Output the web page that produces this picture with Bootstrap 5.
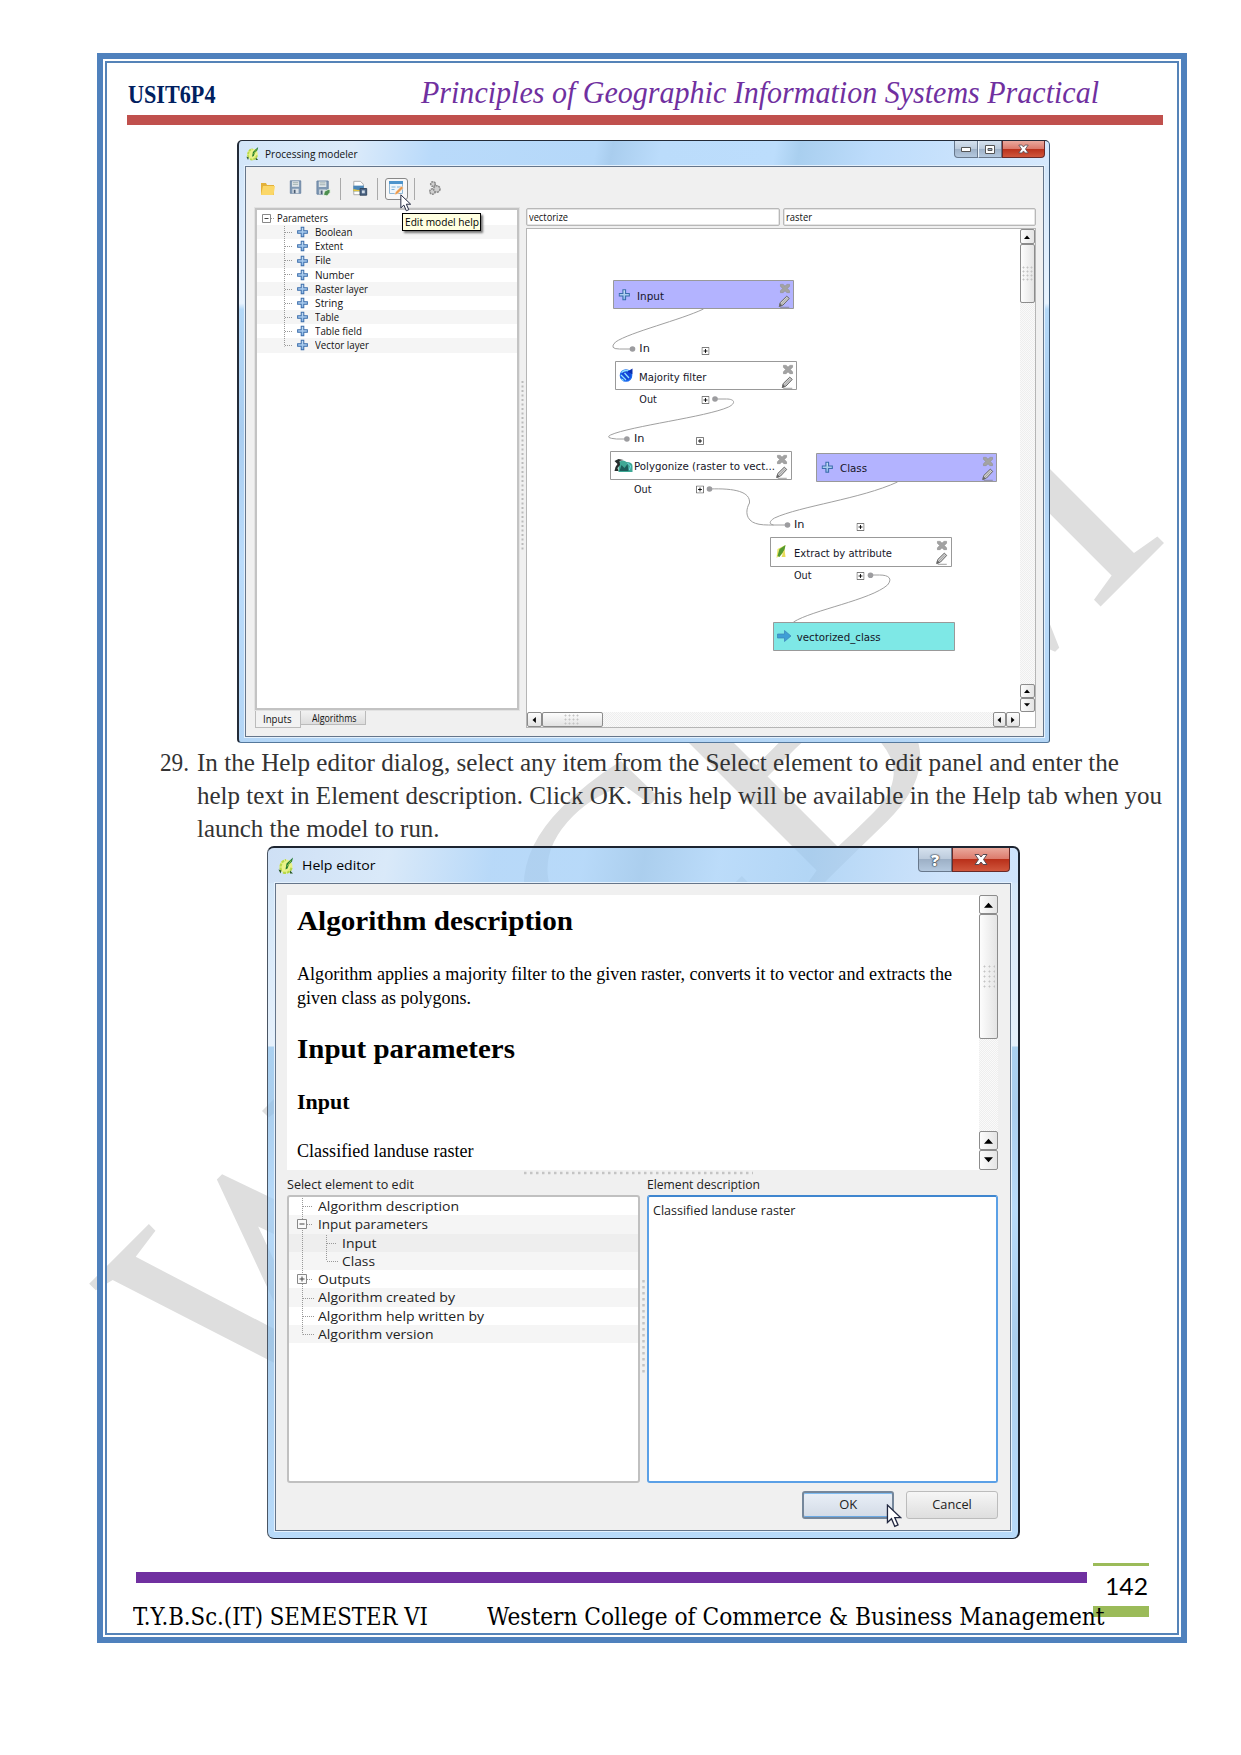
<!DOCTYPE html>
<html lang="en">
<head>
<meta charset="utf-8">
<title>Principles of Geographic Information Systems Practical</title>
<link rel="stylesheet" href="https://cdn.jsdelivr.net/npm/bootstrap@5.3.0/dist/css/bootstrap.min.css">
<style>
body{width:1241px;height:1755px;background:#fff;position:relative;overflow:hidden;font-family:"Liberation Serif",serif;color:#000}
.fit{display:inline-block;white-space:nowrap;transform-origin:0 50%;flex:none}
.watermark{position:absolute;left:0;top:0;z-index:0}
.sheet{position:relative;z-index:1;width:1090px;height:1590px;margin:53px 0 0 97px;border:6px solid #4f81bd;box-shadow:inset 0 0 0 2px #fff,inset 0 0 0 4px #5583b8}
.doc-head{height:56px;padding:8.5px 0 0 25px;line-height:48px}
.code{font-size:25px;font-weight:700;color:#002060;width:293px}
.subject{font-size:32px;font-style:italic;color:#7030a0}
.redrule{height:10px;width:1036px;margin-left:24px;background:#c0504d}
.steps{margin:2.5px 0 0 57px;font-size:24.5px;line-height:33.2px;color:#333;height:100.5px}
.steps .num{width:37px}
/* aero windows */
.aero{border:1px solid #2b3442;font-family:"Open Sans",sans-serif;flex:none}
.aero-client{background:#f0f0f0;border:1px solid #65758a;box-shadow:0 0 0 1px #e4f1fd}
.capt{display:flex;flex:none}
.capt span{display:flex;align-items:center;justify-content:center;border:1px solid #68788c;border-top:0;border-left-color:#eef5fc;background:linear-gradient(#d5e1ee,#bccbdc 48%,#9db0c6 50%,#b4c8de)}
.capt span:first-child{border-left-color:#68788c;border-bottom-left-radius:4px}
.capt .x{background:linear-gradient(#eaa99d,#dc7a6b 48%,#b9301a 50%,#d0563c);border-color:#6a2a28;border-bottom-right-radius:4px}
.capt .q{font-size:16px;font-weight:800;line-height:22px;color:#fff;text-shadow:0 0 1px #39414c,0 0 1px #39414c,0 0 2px #39414c,0 0 1px #39414c}
#w1{width:813px;height:603px;margin:15px 0 0 134px;border-left-width:2px;border-color:#232b38 #3e5a78 #55789c #232b38;border-radius:5px 5px 3px 4px;
 background:linear-gradient(100deg,#d3e6f9 0,#dcebfa 14%,#b9dafa 24%,#b5d8f9 44%,#a9cdee 46%,#bbdcfb 52%,#bcddfc 66%,#a9cfef 69%,#bddcfb 78%,#d6e9fd 100%) 0 0/100% 25px no-repeat,linear-gradient(#cfe4f9,#e8f3fe 27%,#b5d9f8 28%,#a9cdf0 48%,#bbdcfb 70%,#b4d6f6)}
#w1 .bar{height:25px;padding:0 4px 0 7px}
#w1 .aero-client{width:799px;height:571px;margin-left:6px}
#w1 .capt{height:17px}
.ttl1{font-size:10.8px;line-height:22px;margin-left:6px;color:#111}
.toolbar1{height:41px;padding:11px 0 0 14px}
.toolbar1>svg,.toolbar1>b{flex:none}
.sepr{width:1px;height:22px;background:#aaa;flex:none}
.actbtn{width:23px;height:22px;border:1px solid #888;border-radius:3px;background:#f8f8f8;flex:none}
.tree1{width:264px;height:502px;border:2px solid #c3c3c3;outline:1px solid #e2e2e2;background:#fff;font-size:10.4px;line-height:14.17px;position:relative;color:#111;padding-top:1px}
.tree1>div{height:14.17px;padding-left:40px}
.tree1>div:nth-of-type(even){background:#f5f5f5}
.tree1>.root{padding-left:20.5px}
.tree1 svg.pl{margin-right:7px;flex:none}
.guide{position:absolute;left:0;top:0;pointer-events:none}
.tree1 .guide{top:1px}
.tabs1{font-size:10px;color:#111}
.tabs1 .on{width:46px;height:18px;border:1px solid #bbb;border-top:0;background:#f2f2f2;line-height:18px;padding-left:7.5px}
.tabs1 .off{width:65px;height:15px;border:1px solid #bbb;border-left:0;background:linear-gradient(#f2f2f2,#ddd);line-height:15px;padding-left:11px}
.ledit{height:18px;border:1px solid #b8b8b8;box-shadow:inset 0 0 0 .5px #ccc;border-radius:2px;background:#fff;font-size:10px;line-height:17px;padding-left:2px;color:#111}
.canvas1{width:510px;height:500px;border:1px solid #b5b5b5;background:#fff}
.track{background:repeating-conic-gradient(#eee 0 25%,#fafafa 0 50%) 0 0/2px 2px}
.sb{border:1px solid #8c8c8c;border-radius:2px;background:linear-gradient(90deg,#fdfdfd,#e4e4e4);display:flex;align-items:center;justify-content:center;flex:none}
.sb.h{background:linear-gradient(#fdfdfd,#e2e2e2)}
.grip{background:radial-gradient(circle at 1.5px 1.5px,#c4c4c4 .8px,transparent 1.2px) 0 0/4px 4px}
.tip{position:absolute;left:402px;top:213px;width:79px;height:18px;z-index:4;background:#ffffe1;border:1px solid #000;box-shadow:2px 2px 2px #777;font:10.8px/16px "Open Sans",sans-serif;padding-left:2px}
.cur{position:absolute;z-index:5}
/* help editor */
#w2{width:753px;height:693px;margin:0 0 0 164px;border-width:2px 2px 1px 1px;border-radius:7px;border-color:#1d2430 #1d2430 #1d2430 #4a5563;
 background:linear-gradient(100deg,rgba(190,214,242,.75) 0,rgba(205,226,247,.75) 16%,rgba(160,204,246,.75) 30%,rgba(160,205,247,.75) 42%,rgba(143,190,232,.75) 50%,rgba(165,208,248,.75) 60%,rgba(153,200,242,.75) 72%,rgba(190,218,250,.75) 90%) 0 0/100% 35px no-repeat,linear-gradient(transparent 35px,rgba(196,222,246,.75) 35px,rgba(222,236,250,.75) 198px,rgba(142,193,235,.75) 199px,rgba(142,190,232,.75) 260px,rgba(160,206,248,.75) 360px,rgba(142,190,232,.75) 490px,rgba(160,206,248,.75))}
#w2 .bar{height:35px;padding:0 8px 0 10px}
#w2 .capt{height:24px}
#w2 .aero-client{width:736px;height:648px;margin-left:7px;padding:11px 0 0 11px}
.ttl2{font-size:13.4px;line-height:33px;margin-left:8px}
.view{width:711px;height:275px;background:#fff;font-family:"Liberation Serif",serif;font-size:18.5px}
.view .copy{width:692px;padding-left:10px}
.view p,.view h1,.view h2{margin:0;color:#000}
.view h1{font-size:27.5px;font-weight:700;line-height:36px}
.view h2{font-size:20.5px;font-weight:700;line-height:26px}
.view p{line-height:24px}
.lbl{font-size:12.6px;line-height:17px;color:#222;height:17px}
.tree2{width:353px;height:288px;border:2px solid #c0c0c0;border-radius:3px;background:#fff;font-size:12.8px;line-height:18.28px;position:relative;color:#222}
.tree2>div{height:18.28px;padding-left:28.5px;line-height:18.7px}
.tree2>div.kid{padding-left:52.5px}
.tree2 .g1{background:#f5f5f5}.tree2 .g2{background:#eee}
.area{width:351px;height:288px;border:2px solid #5ba0e6;border-top-color:#3f86cf;border-radius:3px;background:#fff;font-size:12.6px;line-height:18px;padding:4.5px 0 0 4px;color:#222}
.wbtn{width:92px;height:28px;padding:0;border:1px solid #bcbcbc;border-radius:3px;background:linear-gradient(#f6f6f6,#dedede);font:12.6px/25px "Open Sans",sans-serif;color:#222;text-align:center}
.wbtn.def{border:2px solid #75879b;background:linear-gradient(#e9eff7,#d3dbe6);box-shadow:inset 0 1px 0 #7fbcf2,inset 0 -1px 0 #6ba9e4;line-height:23px}
/* footer */
.foot{margin:24px 0 0 33px}
.purple{width:951px;height:11px;margin-top:9px;background:#7030a0}
.foot-txt{font:24.6px/34px "DejaVu Serif",serif;font-stretch:condensed;margin:17px 0 0 -3.5px;position:relative;z-index:2}
.pageno{width:56px;height:54px;margin-left:5.5px;border-top:3.5px solid #9bbb59;border-bottom:11px solid #9bbb59;font:24px/40px Lato,sans-serif;padding-left:12.5px}
</style>
</head>
<body>
<svg width="0" height="0" style="position:absolute"><defs>
<linearGradient id="pg" x2="0" y2="1"><stop offset="0" stop-color="#cfe4f7"/><stop offset="1" stop-color="#86b5e6"/></linearGradient>
<symbol id="plus" viewBox="0 0 12 12"><path d="M4.600 .7h2.800v3.900h3.900v2.800H7.400v3.900H4.600V7.400H.7V4.600h3.900z" fill="url(#pg)" stroke="#3a6cab" stroke-width="1.1"/></symbol>
<symbol id="qgis" viewBox="0 0 16 18"><ellipse cx="8" cy="10" rx="6.500" ry="7" fill="#e9f28a"/><path d="M3 14C1.500 9 4 4 8 3.500M5 16c4 1.500 8-1 8.500-5" fill="none" stroke="#b7d84a" stroke-width="2.200" stroke-dasharray="3 1"/><path d="M7.500 13L8.500 7l6.500-6-1 4-3 3-1.500 4z" fill="#1f7a2d"/><path d="M9 10L13 4" stroke="#b7dc4a" stroke-width=".8"/><path d="M.5 13l3 1-1 3zM12 14l3 3h-3z" fill="#2a5a26"/></symbol>
<symbol id="cursor" viewBox="0 0 14 22"><path d="M1 1v16l3.700-3.500 3 7 3-1.300-3-6.700H13z" fill="#fff" stroke="#222840" stroke-width="1.200"/></symbol>
<symbol id="xx" viewBox="0 0 12 12"><path d="M1 1.500H4L6 3.500 8 1.500h3V3.500L8.500 6 11 8.500v2H8L6 8.500 4 10.500H1v-2L3.500 6 1 3.500z" fill="#a3a3a3" stroke="#959595" stroke-width=".8" stroke-linejoin="round"/></symbol>
<symbol id="pen" viewBox="0 0 12 13"><path d="M1 11.500l1-4L8.500 1.200 11 3.400 4.800 10z" fill="#d0d0d0" stroke="#666" stroke-width="1"/><path d="M3.300 9L8.800 3.200" stroke="#999" stroke-width=".8"/><path d="M1 11.500l.8-3 2 2zM2 12.300h9" stroke="#777" stroke-width=".7" fill="#555"/></symbol>
<symbol id="pbx" viewBox="0 0 9 9"><path d="M.5.5h8v8h-8z" fill="#fff" stroke="#666"/><path d="M2.300 4.500h4.400M4.500 2.300v4.400" stroke="#000"/></symbol>
<symbol id="up" viewBox="0 0 8 5"><path d="M0 5L4 .5 8 5z"/></symbol>
<symbol id="close" viewBox="0 0 14 12"><path d="M1 1h4l2 2.500L9 1h4L9.500 6l3.500 5H9L7 8.500 5 11H1L4.500 6z" fill="#fff" stroke="#564a52" stroke-width="1"/></symbol>
<symbol id="disk" viewBox="0 0 14 16"><path d="M1 1h12v14H1z" fill="#7f98b3" stroke="#6a84a2"/><path d="M3 1.500h8v6H3z" fill="#dfe5e8"/><path d="M4 3h6M4 5h6" stroke="#9fb0b0"/><path d="M3.500 10h7v5h-7z" fill="#dce2e8"/><path d="M5 11h2v4H5z" fill="#4a5d75"/></symbol>
</defs></svg>

<svg class="watermark" width="1241" height="1755"><text transform="translate(256 1451) rotate(-45) scale(1 1.09)" font-family="Liberation Serif" font-size="331" fill="#dedede" textLength="1294" lengthAdjust="spacingAndGlyphs">WCCBM</text></svg>

<main class="sheet d-flex flex-column">
 <header class="doc-head d-flex align-items-baseline"><div class="code"><span class="fit" data-w="87.5">USIT6P4</span></div><div class="subject"><span class="fit" data-w="678">Principles of Geographic Information Systems Practical</span></div></header>
 <div class="redrule flex-shrink-0"></div>

 <section class="aero" id="w1">
  <div class="bar d-flex justify-content-between">
   <div class="d-flex align-items-center"><svg width="13" height="15"><use href="#qgis"/></svg><span class="ttl1 fit" data-w="92.5">Processing modeler</span></div>
   <div class="capt"><span style="width:24px"><svg width="10" height="5"><path d="M.5.5h9v4h-9z" fill="#fff" stroke="#555"/></svg></span><span style="width:24px"><svg width="10" height="9"><path d="M.5.5h9v8h-9z" fill="#fff" stroke="#555"/><path d="M3 3.500h4v2H3z" fill="#9db0c6" stroke="#555"/></svg></span><span class="x" style="width:43px"><svg width="11" height="10"><use href="#close"/></svg></span></div>
  </div>
  <div class="aero-client">
   <div class="toolbar1 d-flex">
    <svg width="16" height="22" viewBox="0 0 16 22" class="me-3"><path d="M1 5h5l1 2h7v10H1z" fill="#e3b13a"/><path d="M3 8h12l-1.500 9H1z" fill="#fbd768"/></svg>
    <svg width="14" height="21" style="margin-left:-3px;margin-right:13px" viewBox="0 0 14 22"><use href="#disk" y="2" width="13" height="15"/></svg>
    <svg width="15" height="21" viewBox="0 0 16 22" style="margin-right:9px"><use href="#disk" y="2" width="14" height="16"/><path d="M8 18l1-4 4-2h2v3l-3 4z" fill="#4d8f50" stroke="#e6f3e3"/></svg>
    <b class="sepr" style="margin-right:9px"></b>
    <svg width="20" height="21" viewBox="0 0 20 22"><path d="M3.500 3.500h7l3 3v11h-10z" fill="#fff" stroke="#aaa"/><path d="M3 8h11v6H3z" fill="#4a86b8"/><path d="M3 11.500l5 1 6-1V14H3z" fill="#e3c541"/><path d="M10 11h7v7h-7z" fill="#4c6484" stroke="#32475f"/><path d="M12 13h3v3h-3z" fill="#cfdbe7"/></svg>
    <b class="sepr" style="margin:0 7px"></b>
    <div class="actbtn"><svg class="d-block" width="21" height="20" viewBox="0 0 21 20"><path d="M3.500 2.500h13v12h-13z" fill="#eef6fc" stroke="#8fb6d4"/><path d="M3 2h14v3H3z" fill="#4d94cc"/><path d="M5.500 8h4M5.500 10.500h3M11 8h4" stroke="#7fb2d8"/><path d="M8.500 16l1-3 6-6 2 2-6 6z" fill="#eb9b4e" stroke="#fff" stroke-width=".5"/></svg></div>
    <b class="sepr" style="margin:0 13px 0 6px"></b>
    <svg width="14" height="22" viewBox="0 0 14 22"><g fill="#d0d0d0" stroke="#8b8b8b" stroke-width="1.600"><circle cx="5" cy="6" r="2.300" stroke-dasharray="2 .7"/><circle cx="4.500" cy="13.500" r="2.700" stroke-dasharray="2 .7"/><circle cx="8.800" cy="11" r="3.200" stroke-dasharray="2 .7"/></g></svg>
   </div>
   <div class="d-flex">
    <div style="margin-left:8.500px;width:264px">
     <div class="tree1">
      <div class="root"><span class="fit" data-w="51">Parameters</span></div>
      <div class="d-flex align-items-center"><svg class="pl" width="11" height="12"><use href="#plus"/></svg><span class="fit" data-w="37.5">Boolean</span></div>
      <div class="d-flex align-items-center"><svg class="pl" width="11" height="12"><use href="#plus"/></svg><span class="fit" data-w="28">Extent</span></div>
      <div class="d-flex align-items-center"><svg class="pl" width="11" height="12"><use href="#plus"/></svg><span class="fit" data-w="16">File</span></div>
      <div class="d-flex align-items-center"><svg class="pl" width="11" height="12"><use href="#plus"/></svg><span class="fit" data-w="39">Number</span></div>
      <div class="d-flex align-items-center"><svg class="pl" width="11" height="12"><use href="#plus"/></svg><span class="fit" data-w="53">Raster layer</span></div>
      <div class="d-flex align-items-center"><svg class="pl" width="11" height="12"><use href="#plus"/></svg><span class="fit" data-w="28">String</span></div>
      <div class="d-flex align-items-center"><svg class="pl" width="11" height="12"><use href="#plus"/></svg><span class="fit" data-w="24">Table</span></div>
      <div class="d-flex align-items-center"><svg class="pl" width="11" height="12"><use href="#plus"/></svg><span class="fit" data-w="47">Table field</span></div>
      <div class="d-flex align-items-center"><svg class="pl" width="11" height="12"><use href="#plus"/></svg><span class="fit" data-w="54">Vector layer</span></div>
      <svg class="guide" width="60" height="150"><path d="M27.500 15v120.500M28 21.500h8M28 35.500h8M28 49.500h8M28 63.500h8M28 78.500h8M28 92.500h8M28 106.500h8M28 120.500h8M28 134.500h8M14 7.500h4" stroke="#999" stroke-dasharray="1 1"/><path d="M5.500 3.500h8v8h-8z" fill="#fff" stroke="#888"/><path d="M7.500 7.500h4" stroke="#444"/></svg>
     </div>
     <div class="tabs1 d-flex"><div class="on"><span class="fit" data-w="28.500">Inputs</span></div><div class="off"><span class="fit" data-w="44.500">Algorithms</span></div></div>
    </div>
    <svg width="7" height="500"><path d="M3.500 173v171" stroke="#bbb" stroke-width="2" stroke-dasharray="2 2.500"/></svg>
    <div>
     <div class="d-flex" style="gap:3px;margin-bottom:2px"><div class="ledit" style="width:254px"><span class="fit" data-w="39">vectorize</span></div><div class="ledit" style="width:253px"><span class="fit" data-w="26">raster</span></div></div>
     <div class="canvas1 d-flex flex-column">
      <div class="d-flex">
       <svg width="493" height="483" viewBox="526.500 229 493 483" font-family="DejaVu Sans,sans-serif" font-size="10.500">
        <g fill="none" stroke="#a0a0a0"><path d="M703 309C680 320 630 332 615 342Q608 349 619 349H632"/><path d="M714 399h12C734 399 736 403 728 407C706 417 630 426 610 435Q604 438 616 439H626"/><path d="M709 489C735 488 750 492 749 503C746 508 744 517 752 522Q757 525 768 525H787"/><path d="M897 482C860 499 800 506 774 518C769 521 768 524 773 525"/><path d="M870 575h9C889 575 892 579 887 585C870 600 812 610 793 622"/></g>
        <g fill="#9c9c9f"><circle cx="632" cy="349" r="2.800"/><circle cx="714.500" cy="399" r="2.800"/><circle cx="626.400" cy="439" r="2.800"/><circle cx="709" cy="489" r="2.800"/><circle cx="787" cy="525" r="2.800"/><circle cx="870" cy="575.300" r="2.800"/></g>
        <g stroke="#999"><path d="M613 280.500h180v28h-180zM816 453.500h180v28h-180z" fill="#b3b3ff"/><path d="M615 361.500h181v28h-181zM610 451.500h181v28h-181zM770 537.500h181v29h-181z" fill="#fff"/><path d="M773 622.500h181v28h-181z" fill="#7ee8e6"/></g>
        <use href="#plus" x="618" y="288.500" width="11.500" height="12.500"/><use href="#plus" x="821" y="461" width="11.500" height="12.500"/>
        <g><use href="#xx" x="779" y="283" width="11" height="11"/><use href="#pen" x="777.500" y="295" width="12.500" height="13"/><use href="#xx" x="782" y="364" width="11" height="11"/><use href="#pen" x="780.500" y="376" width="12.500" height="13"/><use href="#xx" x="776" y="454" width="11" height="11"/><use href="#pen" x="775" y="466" width="12.500" height="13"/><use href="#xx" x="982" y="456" width="11" height="11"/><use href="#pen" x="981" y="468" width="12.500" height="13"/><use href="#xx" x="936" y="540" width="11" height="11"/><use href="#pen" x="935" y="552" width="12.500" height="13"/></g>
        <g><use href="#pbx" x="701" y="347" width="8" height="8"/><use href="#pbx" x="701" y="396" width="8" height="8"/><use href="#pbx" x="695.500" y="437" width="8" height="8"/><use href="#pbx" x="695.500" y="485.500" width="8" height="8"/><use href="#pbx" x="856" y="523" width="8" height="8"/><use href="#pbx" x="856" y="572" width="8" height="8"/></g>
        <circle cx="625.500" cy="375.500" r="5.600" fill="#1446d8" stroke="#1a6cf0" stroke-width="1.400"/><path d="M621 372.500q3.500-3 7-1.500M620.500 375l5 5M624 373l4.500 5M621 379l2 1.500" stroke="#8fe4ff" stroke-width="1.300" fill="none"/><path d="M632 368.500v6l-5-3z" fill="#0a2fae"/>
        <path d="M618 462q5-3 8 0 6 0 6 4v6h-14z" fill="#3fa895"/><path d="M619 471l2-6 3 3 3-4 1 7z" fill="#1d5d5a"/><path d="M614 461l4-2 5 1-4 1 .5 4-2.500 3 1 3h-4l1-4 2-3z" fill="#252c2c"/><path d="M627 463l3 3-1 4" stroke="#7adcec" fill="none"/>
        <path d="M776 558l1-9 8-4-2 8z" fill="#e9e76a"/><path d="M777 556l2-7 6-4-1 5-5 7z" fill="#54992e"/><path d="M781 557l3-8 1 8z" fill="#e9dc5a"/>
        <path d="M777 634h7v-3.500l6.500 5.500-6.500 5.500V638h-7z" fill="#3e9fd6" stroke="#3b82b8" stroke-width=".7"/>
        <g fill="#161628" lengthAdjust="spacingAndGlyphs"><text x="636.500" y="300.300" textLength="27">Input</text><text x="638.800" y="352" textLength="10.500">In</text><text x="638.500" y="380.500" textLength="67.500">Majority filter</text><text x="638.800" y="403" textLength="17.500">Out</text><text x="633.500" y="442" textLength="10.500">In</text><text x="633.500" y="470" textLength="141">Polygonize (raster to vect...</text><text x="633.500" y="492.500" textLength="17.500">Out</text><text x="839.500" y="472" textLength="27">Class</text><text x="793.500" y="528" textLength="10.500">In</text><text x="793.500" y="556.500" textLength="98">Extract by attribute</text><text x="793.500" y="579" textLength="17.500">Out</text><text x="796.200" y="640.500" textLength="84">vectorized_class</text></g>
       </svg>
       <div class="track d-flex flex-column" style="width:15px;height:483px"><div class="sb" style="height:15px"><svg width="6" height="4"><use href="#up"/></svg></div><div class="sb" style="height:59px"><i class="grip" style="width:11px;height:16px"></i></div><div class="sb mt-auto" style="height:14px"><svg width="6" height="4"><use href="#up"/></svg></div><div class="sb" style="height:14px"><svg width="6" height="4" style="transform:scaleY(-1)"><use href="#up"/></svg></div></div>
      </div>
      <div class="track d-flex" style="width:493px;height:15px"><div class="sb h" style="width:15px"><svg width="6" height="4" style="transform:rotate(-90deg)"><use href="#up"/></svg></div><div class="sb h" style="width:61px"><i class="grip" style="width:16px;height:11px"></i></div><div class="sb h ms-auto" style="width:13px"><svg width="6" height="4" style="transform:rotate(-90deg)"><use href="#up"/></svg></div><div class="sb h" style="width:14px"><svg width="6" height="4" style="transform:rotate(90deg)"><use href="#up"/></svg></div></div>
     </div>
    </div>
   </div>
  </div>
 </section>

 <div class="steps d-flex flex-shrink-0"><div class="num"><span class="fit" data-w="29">29.</span></div><div><div><span class="fit" data-w="922">In the Help editor dialog, select any item from the Select element to edit panel and enter the</span></div><div><span class="fit" data-w="965">help text in Element description. Click OK. This help will be available in the Help tab when you</span></div><div><span class="fit" data-w="242.500">launch the model to run.</span></div></div></div>

 <section class="aero" id="w2">
  <div class="bar d-flex justify-content-between">
   <div class="d-flex align-items-center"><svg width="16" height="19"><use href="#qgis"/></svg><span class="ttl2 fit" data-w="73.500">Help editor</span></div>
   <div class="capt"><span class="q" style="width:34px">?</span><span class="x" style="width:58px"><svg width="14" height="13"><use href="#close"/></svg></span></div>
  </div>
  <div class="aero-client">
   <div class="view d-flex">
    <div class="copy">
     <h1 style="padding-top:7.500px"><span class="fit" data-w="276">Algorithm description</span></h1>
     <p style="padding-top:23px"><span class="fit" data-w="655">Algorithm applies a majority filter to the given raster, converts it to vector and extracts the</span></p>
     <p><span class="fit" data-w="174">given class as polygons.</span></p>
     <h1 style="padding-top:21.500px"><span class="fit" data-w="218">Input parameters</span></h1>
     <h2 style="padding-top:22px"><span class="fit" data-w="52.500">Input</span></h2>
     <p style="padding-top:23.500px"><span class="fit" data-w="176.500">Classified landuse raster</span></p>
    </div>
    <div class="track d-flex flex-column" style="width:19px"><div class="sb" style="height:19px"><svg width="9" height="6"><use href="#up"/></svg></div><div class="sb" style="height:125px"><i class="grip" style="width:12px;height:24px;background-size:5px 5px"></i></div><div class="sb mt-auto" style="height:19px"><svg width="9" height="6"><use href="#up"/></svg></div><div class="sb" style="height:20px"><svg width="9" height="6" style="transform:scaleY(-1)"><use href="#up"/></svg></div></div>
   </div>
   <svg class="d-block" width="711" height="6"><path d="M237 3h229" stroke="#c4c4c4" stroke-width="2.500" stroke-dasharray="2.500 3.500"/></svg>
   <div class="d-flex">
    <div><div class="lbl"><span class="fit" data-w="127">Select element to edit</span></div>
     <div class="tree2" style="margin-top:2px">
      <div><span class="fit" data-w="141">Algorithm description</span></div>
      <div class="g1"><span class="fit" data-w="110">Input parameters</span></div>
      <div class="g2 kid"><span class="fit" data-w="34.500">Input</span></div>
      <div class="g1 kid"><span class="fit" data-w="33">Class</span></div>
      <div><span class="fit" data-w="52.500">Outputs</span></div>
      <div class="g1"><span class="fit" data-w="137">Algorithm created by</span></div>
      <div><span class="fit" data-w="166">Algorithm help written by</span></div>
      <div class="g1"><span class="fit" data-w="115.500">Algorithm version</span></div>
      <svg class="guide" width="60" height="150"><path d="M13.500 1v136.500M14 9.500h10M18 27.500h6M18 82.500h6M14 101.500h11M14 119.500h11M14 137.500h11M37.500 38v26M38 46.500h10M38 64.500h11" stroke="#999" fill="none" stroke-dasharray="1 1"/><path d="M8.500 22.500h9v9h-9zM8.500 77.500h9v9h-9z" fill="#fafafa" stroke="#888"/><path d="M10.500 27h5M10.500 82h5M13 79.500v5" stroke="#444"/></svg>
     </div></div>
    <svg width="7" height="307"><path d="M3.500 104v94" stroke="#c4c4c4" stroke-width="2.500" stroke-dasharray="2.500 3.500"/></svg>
    <div><div class="lbl"><span class="fit" data-w="113">Element description</span></div><div class="area" style="margin-top:2px"><span class="fit" data-w="142.500">Classified landuse raster</span></div></div>
   </div>
   <div class="d-flex justify-content-end" style="width:711px;gap:12px;padding-top:7.500px"><button class="wbtn def"><span class="fit" data-w="18">OK</span></button><button class="wbtn"><span class="fit" data-w="39.500">Cancel</span></button></div>
  </div>
 </section>

 <footer class="foot d-flex"><div style="width:951px"><div class="purple"></div><div class="foot-txt d-flex"><span class="fit" data-w="295">T.Y.B.Sc.(IT) SEMESTER VI</span><span class="fit" data-w="617.500" style="margin-left:59.500px">Western College of Commerce &amp; Business Management</span></div></div><div class="pageno"><span class="fit" data-w="43">142</span></div></footer>
</main>

<div class="tip"><span class="fit" data-w="74">Edit model help</span></div>
<svg class="cur" style="left:400px;top:194px" width="11.500" height="18"><use href="#cursor"/></svg>
<svg class="cur" style="left:886px;top:1504px" width="16" height="24"><use href="#cursor"/></svg>

<script src="https://cdn.jsdelivr.net/npm/bootstrap@5.3.0/dist/js/bootstrap.bundle.min.js"></script>
<script>
document.querySelectorAll('.fit').forEach(function(e){
  var w=parseFloat(e.dataset.w),r=document.createRange();
  r.selectNodeContents(e);
  var n=r.getBoundingClientRect().width;
  e.style.width=w+'px';e.style.transform='scaleX('+(w/n)+')';
});
document.querySelectorAll('svg g[lengthAdjust] text').forEach(function(t){t.setAttribute('lengthAdjust','spacingAndGlyphs');});
</script>
</body>
</html>
